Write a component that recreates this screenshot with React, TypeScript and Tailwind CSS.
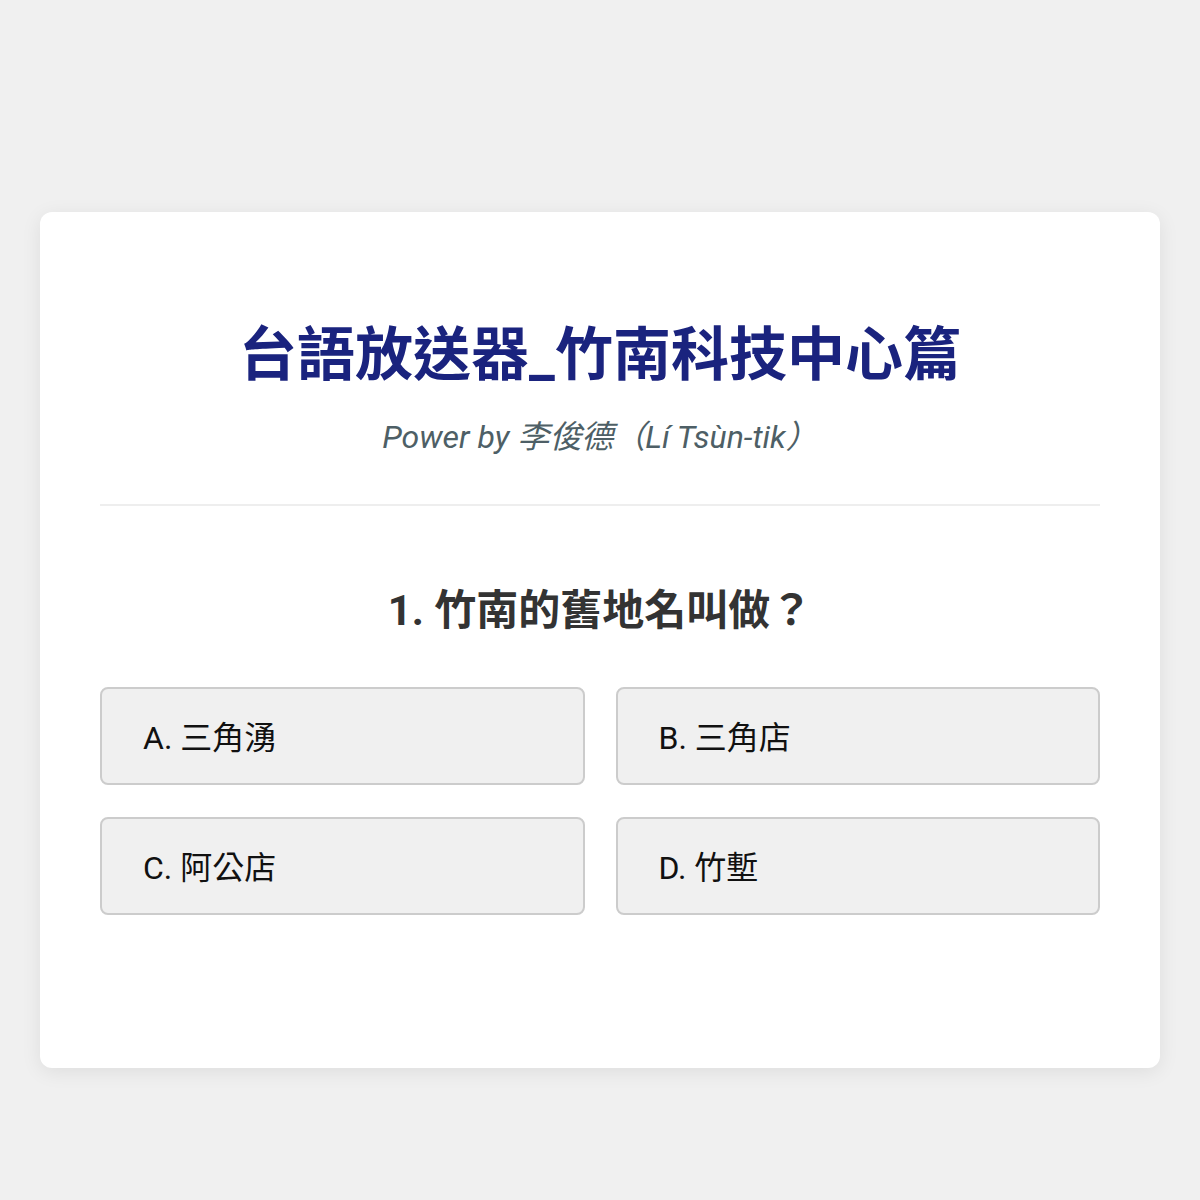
const options = [
  { key: "A", text: "三角湧" },
  { key: "B", text: "三角店" },
  { key: "C", text: "阿公店" },
  { key: "D", text: "竹塹" },
];

export default function App() {
  return (
    <div
      className="min-h-[1200px] bg-[#f0f0f0] px-10 pt-[212px]"
      style={{ fontFamily: 'Roboto, "Noto Sans CJK TC", sans-serif' }}
    >
      <div className="rounded-xl bg-white px-[60px] pt-[108px] pb-[153px] shadow-[0_4px_20px_rgba(0,0,0,0.08)]">
        <div className="border-b-2 border-[#eeeeee] pb-[43px] text-center">
          <h1 className="text-[58px] font-bold leading-[70px] text-[#1a237e]">
            台語放送器_竹南科技中心篇
          </h1>
          <p className="mt-[23px] text-[32px] italic leading-[48px] text-[#4e5f66]">
            Power by 李俊德（Lí Tsùn-tik）
          </p>
        </div>
        <h2 className="mt-[73px] text-center text-[42px] font-bold leading-[63px] text-[#333333]">
          1. 竹南的舊地名叫做？
        </h2>
        <div className="mt-[45px] grid grid-cols-2 gap-x-[31px] gap-y-8">
          {options.map((o) => (
            <button
              key={o.key}
              className="flex h-[98px] items-center rounded-lg border-2 border-[#cccccc] bg-[#f0f0f0] pt-1 pl-[41px] text-left text-[32px] text-[#111111]"
            >
              {o.key}. {o.text}
            </button>
          ))}
        </div>
      </div>
    </div>
  );
}
